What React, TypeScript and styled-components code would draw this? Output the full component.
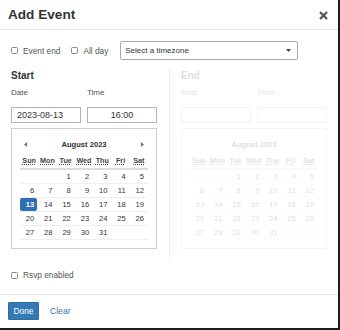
import React from "react";
import styled, { createGlobalStyle } from "styled-components";

const GlobalStyle = createGlobalStyle`
  html, body {
    margin: 0;
    padding: 0;
    background: #ffffff;
  }
  body {
    font-family: "Liberation Sans", Arial, sans-serif;
    color: #333333;
  }
`;

const Modal = styled.div`
  width: 338px;
  height: 328px;
  background: #ffffff;
  border-right: 2px solid #1e1e1e;
  border-bottom: 2px solid #1e1e1e;
  display: flex;
  flex-direction: column;
`;

const Header = styled.div`
  height: 29px;
  border-bottom: 1px solid #e5e5e5;
  display: flex;
  align-items: center;
  justify-content: space-between;
  padding: 0 10px 0 8px;
  h1 {
    margin: 0;
    font-size: 13.6px;
    font-weight: bold;
    color: #333333;
  }
`;

const CloseButton = styled.svg`
  width: 9px;
  height: 9px;
  margin-top: 1px;
`;

const Body = styled.div`
  flex: 1;
  padding: 11px 11px 0 11px;
  display: flex;
  flex-direction: column;
`;

const OptionsRow = styled.div`
  display: flex;
  align-items: center;
  height: 19px;
`;

const CheckLabel = styled.label<{ $gap?: number }>`
  display: flex;
  align-items: center;
  gap: 5px;
  font-size: 8.3px;
  color: #555555;
  margin-right: ${(p) => p.$gap ?? 0}px;
  white-space: nowrap;
`;

const Check = styled.input`
  appearance: none;
  margin: 0;
  width: 7px;
  height: 7px;
  border: 1px solid #8a8a8a;
  border-radius: 1.5px;
  background: #ffffff;
`;

const Select = styled.div`
  width: 178px;
  height: 19px;
  box-sizing: border-box;
  border: 1px solid #aaaaaa;
  border-radius: 2px;
  display: flex;
  align-items: center;
  justify-content: space-between;
  padding: 0 6px 0 4px;
  font-size: 8px;
  color: #333333;
`;

const Columns = styled.div`
  display: flex;
  margin-top: 7px;
`;

const Column = styled.div<{ $faded?: boolean }>`
  width: 146px;
  padding-bottom: 14px;
  opacity: ${(p) => (p.$faded ? 0.16 : 1)};
`;

const Divider = styled.div`
  width: 1px;
  background: #eeeeee;
  margin: 1px 11px 0 12px;
`;

const Heading = styled.div`
  height: 18px;
  line-height: 18px;
  font-size: 10px;
  font-weight: bold;
  color: #333333;
`;

const FieldRow = styled.div`
  display: grid;
  grid-template-columns: 70px 70px;
  column-gap: 6px;
`;

const FieldLabel = styled.div`
  height: 14px;
  line-height: 14px;
  margin-top: 1px;
  font-size: 8px;
  color: #555555;
`;

const Input = styled.div<{ $center?: boolean }>`
  margin-top: 7px;
  height: 16px;
  box-sizing: border-box;
  border: 1px solid #b4b4b4;
  display: flex;
  align-items: center;
  justify-content: ${(p) => (p.$center ? "center" : "flex-start")};
  padding: 0 5px;
  font-size: 9px;
  color: #333333;
`;

const Calendar = styled.div`
  margin-top: 5px;
  border: 1px solid #cccccc;
  padding: 6px 8px 8px 8px;
`;

const CalTitle = styled.div`
  height: 18px;
  display: flex;
  align-items: center;
  justify-content: space-between;
  padding: 0 4px;
  font-size: 7.6px;
  font-weight: bold;
  color: #333333;
`;

const Arrow = styled.svg`
  width: 3px;
  height: 5px;
`;

const WeekRow = styled.div`
  display: grid;
  grid-template-columns: repeat(7, 1fr);
  height: 15px;
  border-bottom: 2px solid #dddddd;
  align-items: center;
  font-size: 7.2px;
  font-weight: bold;
  color: #444444;
  abbr {
    text-align: center;
    text-decoration: underline dotted;
    text-underline-offset: 1px;
  }
`;

const DayRow = styled.div`
  display: grid;
  grid-template-columns: repeat(7, 1fr);
  height: 13px;
  border-bottom: 1px solid #eeeeee;
  align-items: stretch;
`;

const Day = styled.div<{ $active?: boolean }>`
  display: flex;
  align-items: center;
  justify-content: flex-end;
  padding-right: 3px;
  font-size: 7.6px;
  color: ${(p) => (p.$active ? "#ffffff" : "#333333")};
  font-weight: ${(p) => (p.$active ? "bold" : "normal")};
  background: ${(p) => (p.$active ? "#2f6fb4" : "transparent")};
  border-radius: 2px;
  margin: 0 1px 0 0;
`;

const RsvpRow = styled.div`
  height: 12px;
  margin-top: 6px;
  display: flex;
  align-items: center;
`;

const Footer = styled.div`
  border-top: 1px solid #e5e5e5;
  padding: 7px 8px 8px 8px;
  display: flex;
  align-items: center;
  gap: 11px;
`;

const DoneButton = styled.button`
  width: 31px;
  height: 18px;
  margin: 0;
  padding: 0;
  background: #337ab7;
  border: 1px solid #2e6da4;
  border-radius: 1px;
  color: #ffffff;
  font-family: "Liberation Sans", Arial, sans-serif;
  font-size: 8.4px;
`;

const LinkButton = styled.span`
  font-size: 8.6px;
  color: #3f74ad;
`;

const weekdays = ["Sun", "Mon", "Tue", "Wed", "Thu", "Fri", "Sat"];
const weeks: (number | null)[][] = [
  [null, null, 1, 2, 3, 4, 5],
  [6, 7, 8, 9, 10, 11, 12],
  [13, 14, 15, 16, 17, 18, 19],
  [20, 21, 22, 23, 24, 25, 26],
  [27, 28, 29, 30, 31, null, null],
];

const MonthView = ({ selected, arrows }: { selected?: number; arrows: boolean }) => (
  <Calendar>
    <CalTitle>
      {arrows ? (
        <Arrow viewBox="0 0 3 5">
          <path d="M3 0 L0 2.5 L3 5 Z" fill="#777" />
        </Arrow>
      ) : (
        <span />
      )}
      <span>August 2023</span>
      {arrows ? (
        <Arrow viewBox="0 0 3 5">
          <path d="M0 0 L3 2.5 L0 5 Z" fill="#777" />
        </Arrow>
      ) : (
        <span />
      )}
    </CalTitle>
    <WeekRow>
      {weekdays.map((d) => (
        <abbr key={d}>{d}</abbr>
      ))}
    </WeekRow>
    {weeks.map((w, i) => (
      <DayRow key={i}>
        {w.map((d, j) => (
          <Day key={j} $active={d === selected}>
            {d ?? ""}
          </Day>
        ))}
      </DayRow>
    ))}
  </Calendar>
);

const DateSide = ({
  title,
  date,
  time,
  faded,
}: {
  title: string;
  date: string;
  time: string;
  faded?: boolean;
}) => (
  <Column $faded={faded}>
    <Heading>{title}</Heading>
    <FieldRow>
      <FieldLabel>Date</FieldLabel>
      <FieldLabel>Time</FieldLabel>
    </FieldRow>
    <FieldRow>
      <Input>{date}</Input>
      <Input $center>{time}</Input>
    </FieldRow>
    <MonthView selected={faded ? undefined : 13} arrows={!faded} />
  </Column>
);

const App = () => {
  return (
    <>
      <GlobalStyle />
      <Modal>
        <Header>
          <h1>Add Event</h1>
          <CloseButton viewBox="0 0 9 9">
            <path d="M1 1 L8 8 M8 1 L1 8" stroke="#555" strokeWidth="2.2" />
          </CloseButton>
        </Header>
        <Body>
          <OptionsRow>
            <CheckLabel $gap={11}>
              <Check type="checkbox" />
              Event end
            </CheckLabel>
            <CheckLabel $gap={12}>
              <Check type="checkbox" />
              All day
            </CheckLabel>
            <Select>
              <span>Select a timezone</span>
              <svg width="5" height="3" viewBox="0 0 5 3">
                <path d="M0 0 L5 0 L2.5 3 Z" fill="#444" />
              </svg>
            </Select>
          </OptionsRow>
          <Columns>
            <DateSide title="Start" date="2023-08-13" time="16:00" />
            <Divider />
            <DateSide title="End" date="" time="" faded />
          </Columns>
          <RsvpRow>
            <CheckLabel>
              <Check type="checkbox" />
              Rsvp enabled
            </CheckLabel>
          </RsvpRow>
        </Body>
        <Footer>
          <DoneButton>Done</DoneButton>
          <LinkButton>Clear</LinkButton>
        </Footer>
      </Modal>
    </>
  );
};

export default App;
